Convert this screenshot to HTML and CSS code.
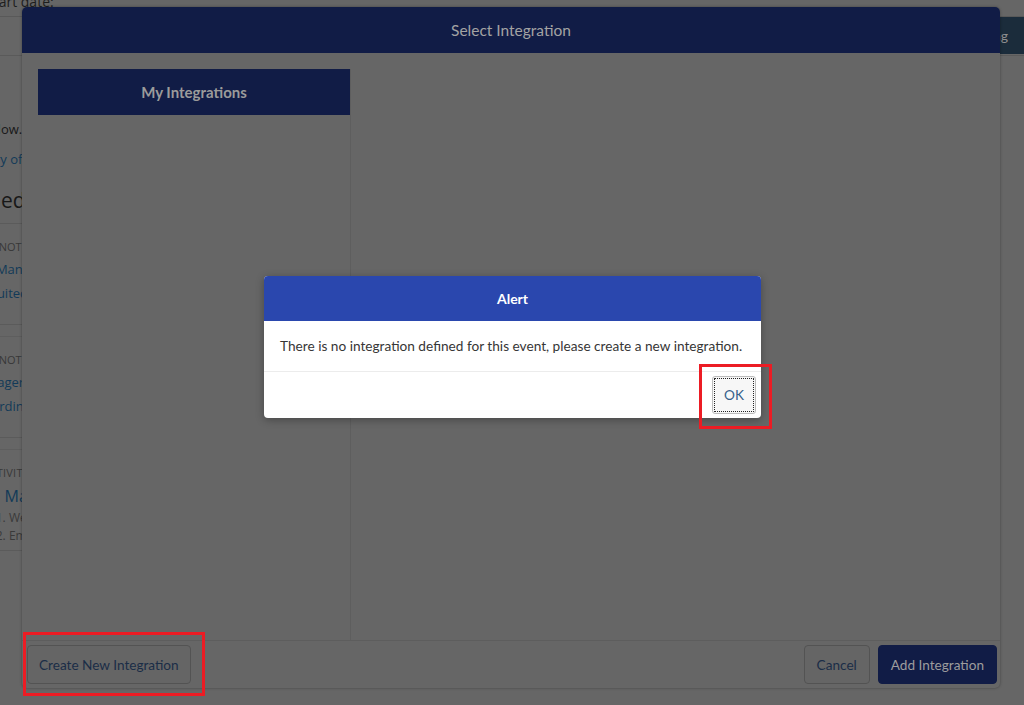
FILE: index.html
```html
<!DOCTYPE html>
<html lang="en">
<head>
<meta charset="utf-8">
<title>Select Integration</title>
<link rel="stylesheet" href="styles.css">
</head>
<body>
<div class="app">
  <div class="crumb"><span class="crumb-text">Start date:</span></div>
  <div class="toolbar"><button class="save-btn">Save Setting</button></div>
  <div class="content">
    <p class="line">Shown below.</p>
    <p class="line link">A summary of the</p>
    <h2 class="heading">Assigned</h2>
    <div class="card">
      <div class="status">Progress: Not started</div>
      <div class="link">Assistant Manager Review</div>
      <div class="link">Tech Recruited</div>
    </div>
    <div class="card">
      <div class="status">Progress: Not started</div>
      <div class="link">Case Manager Check-in</div>
      <div class="link">Final Recording</div>
    </div>
    <div class="card">
      <div class="status status-wide">Recent Activity</div>
      <div class="link big">Phase 1. Manage Team</div>
      <div class="meta">Reminder 1. Weekly update</div>
      <div class="meta">Reminder 2. Email digest</div>
    </div>
  </div>
</div>

<div class="modal">
  <div class="modal-head">Select Integration</div>
  <div class="modal-body">
    <div class="panel">
      <div class="panel-head">My Integrations</div>
    </div>
  </div>
  <div class="modal-foot">
    <button class="btn">Create New Integration</button>
    <div class="foot-right">
      <button class="btn btn-cancel">Cancel</button>
      <button class="btn btn-primary">Add Integration</button>
    </div>
  </div>
</div>

<div class="alert">
  <div class="alert-head">Alert</div>
  <div class="alert-body">There is no integration defined for this event, please create a new integration.</div>
  <div class="alert-foot"><button class="ok-btn">OK</button></div>
</div>

<div class="mark mark-ok"></div>
<div class="mark mark-create"></div>
</body>
</html>
```

FILE: styles.css
```css
html, body {
  margin: 0;
  padding: 0;
}
body {
  width: 1024px;
  height: 705px;
  overflow: hidden;
  position: relative;
  background: #666666;
  font-family: Lato, "Noto Sans", sans-serif;
}

/* ---------- dimmed background page ---------- */
.app {
  display: flex;
  flex-direction: column;
  margin-left: -62px;
  margin-top: -10px;
  width: 1086px;
  font-family: "Open Sans", "Noto Sans", sans-serif;
}
.crumb {
  height: 26px;
  border-bottom: 1px solid #595959;
  padding-left: 48px;
}
.crumb-text {
  font-size: 14px;
  line-height: 14px;
  color: #1e1e1e;
}
.toolbar {
  height: 38px;
  border-bottom: 1px solid #5a5a5a;
  display: flex;
  justify-content: flex-end;
  align-items: flex-start;
}
.save-btn {
  height: 37px;
  border: 0;
  background: #1b2c3b;
  color: #8f8f8f;
  font-family: Lato, sans-serif;
  font-size: 14px;
  padding: 0 16px 0 15px;
}
.content {
  display: flex;
  flex-direction: column;
  width: 520px;
  padding-top: 64px;
}
.line {
  margin: 0 0 12px;
  font-size: 13px;
  line-height: 18px;
  color: #181818;
  white-space: nowrap;
}
.link {
  color: #123a58;
  font-size: 13px;
  line-height: 24px;
  white-space: nowrap;
}
.line.link { line-height: 18px; }
.heading {
  margin: 6px 0 0;
  font-weight: normal;
  font-size: 21px;
  line-height: 28px;
  color: #181818;
  padding-bottom: 9px;
  border-bottom: 1px solid #5b5b5b;
  white-space: nowrap;
}
.card {
  height: 88px;
  padding-top: 12px;
  border-top: 1px solid #5e5e5e;
  border-bottom: 1px solid #5b5b5b;
  margin-top: 11px;
}
.heading + .card {
  border-top: 0;
  margin-top: 0;
}
.status {
  font-size: 11px;
  line-height: 21px;
  text-transform: uppercase;
  color: #383838;
  white-space: nowrap;
}
.status-wide {
  letter-spacing: 0.2px;
}
.big { font-size: 16px; line-height: 26px; }
.meta {
  font-size: 12px;
  line-height: 18px;
  color: #3a3a3a;
  white-space: nowrap;
}

/* ---------- dimmed modal ---------- */
.modal {
  position: absolute;
  left: 22px;
  top: 7px;
  width: 978px;
  height: 681px;
  background: #666666;
  border-radius: 5px;
  box-shadow: 0 0 3px rgba(0, 0, 0, 0.35);
  display: flex;
  flex-direction: column;
}
.modal-head {
  height: 46px;
  flex: none;
  background: #111c46;
  border-radius: 5px 5px 0 0;
  color: #a3a3a3;
  font-size: 15.5px;
  display: flex;
  align-items: center;
  justify-content: center;
}
.modal-body {
  flex: 1;
  display: flex;
  padding: 16px 16px 0;
}
.panel {
  width: 312px;
  border-right: 1px solid #5e5e5e;
}
.panel-head {
  height: 46px;
  background: #111c46;
  color: #9b9b9b;
  font-weight: bold;
  font-size: 15px;
  display: flex;
  align-items: center;
  justify-content: center;
}
.modal-foot {
  height: 47px;
  flex: none;
  border-top: 1px solid #5d5d5d;
  display: flex;
  align-items: center;
  justify-content: space-between;
  padding: 0 3px 0 5px;
}
.foot-right {
  display: flex;
  gap: 8px;
}
.btn {
  height: 39px;
  border: 1px solid #535353;
  border-radius: 4px;
  background: #656565;
  color: #1b2d47;
  font-family: Lato, sans-serif;
  font-size: 13.6px;
  padding: 0 11px;
}
.btn-cancel {
  padding: 0 12px;
}
.btn-primary {
  background: #111c46;
  border-color: #111c46;
  color: #9d9d9d;
  padding: 0 12px;
}

/* ---------- alert ---------- */
.alert {
  position: absolute;
  left: 264px;
  top: 276px;
  width: 497px;
  height: 142px;
  background: #ffffff;
  border-radius: 4px;
  overflow: hidden;
  box-shadow: 0 2px 8px rgba(0, 0, 0, 0.3);
  display: flex;
  flex-direction: column;
}
.alert-head {
  height: 45px;
  flex: none;
  background: #2a47ae;
  color: #ffffff;
  font-weight: bold;
  font-size: 14px;
  display: flex;
  align-items: center;
  justify-content: center;
}
.alert-body {
  height: 50px;
  flex: none;
  padding: 0 16px;
  display: flex;
  align-items: center;
  font-size: 13.65px;
  color: #363636;
  border-bottom: 1px solid #ececec;
}
.alert-foot {
  flex: 1;
  display: flex;
  justify-content: flex-end;
  align-items: center;
  padding: 0 5px;
}
.ok-btn {
  width: 44px;
  height: 38px;
  background: #f7f7f7;
  border: 1px solid #bcbcbc;
  border-radius: 3px;
  outline: 1px dotted #222222;
  outline-offset: -3px;
  color: #35608b;
  font-family: Lato, sans-serif;
  font-size: 13.6px;
  padding: 0;
}

/* ---------- red annotation boxes ---------- */
.mark {
  position: absolute;
  border: 3px solid #ec1c24;
  box-sizing: border-box;
}
.mark-ok {
  left: 699px;
  top: 364px;
  width: 73px;
  height: 65px;
}
.mark-create {
  left: 23px;
  top: 632px;
  width: 182px;
  height: 64px;
}
```
